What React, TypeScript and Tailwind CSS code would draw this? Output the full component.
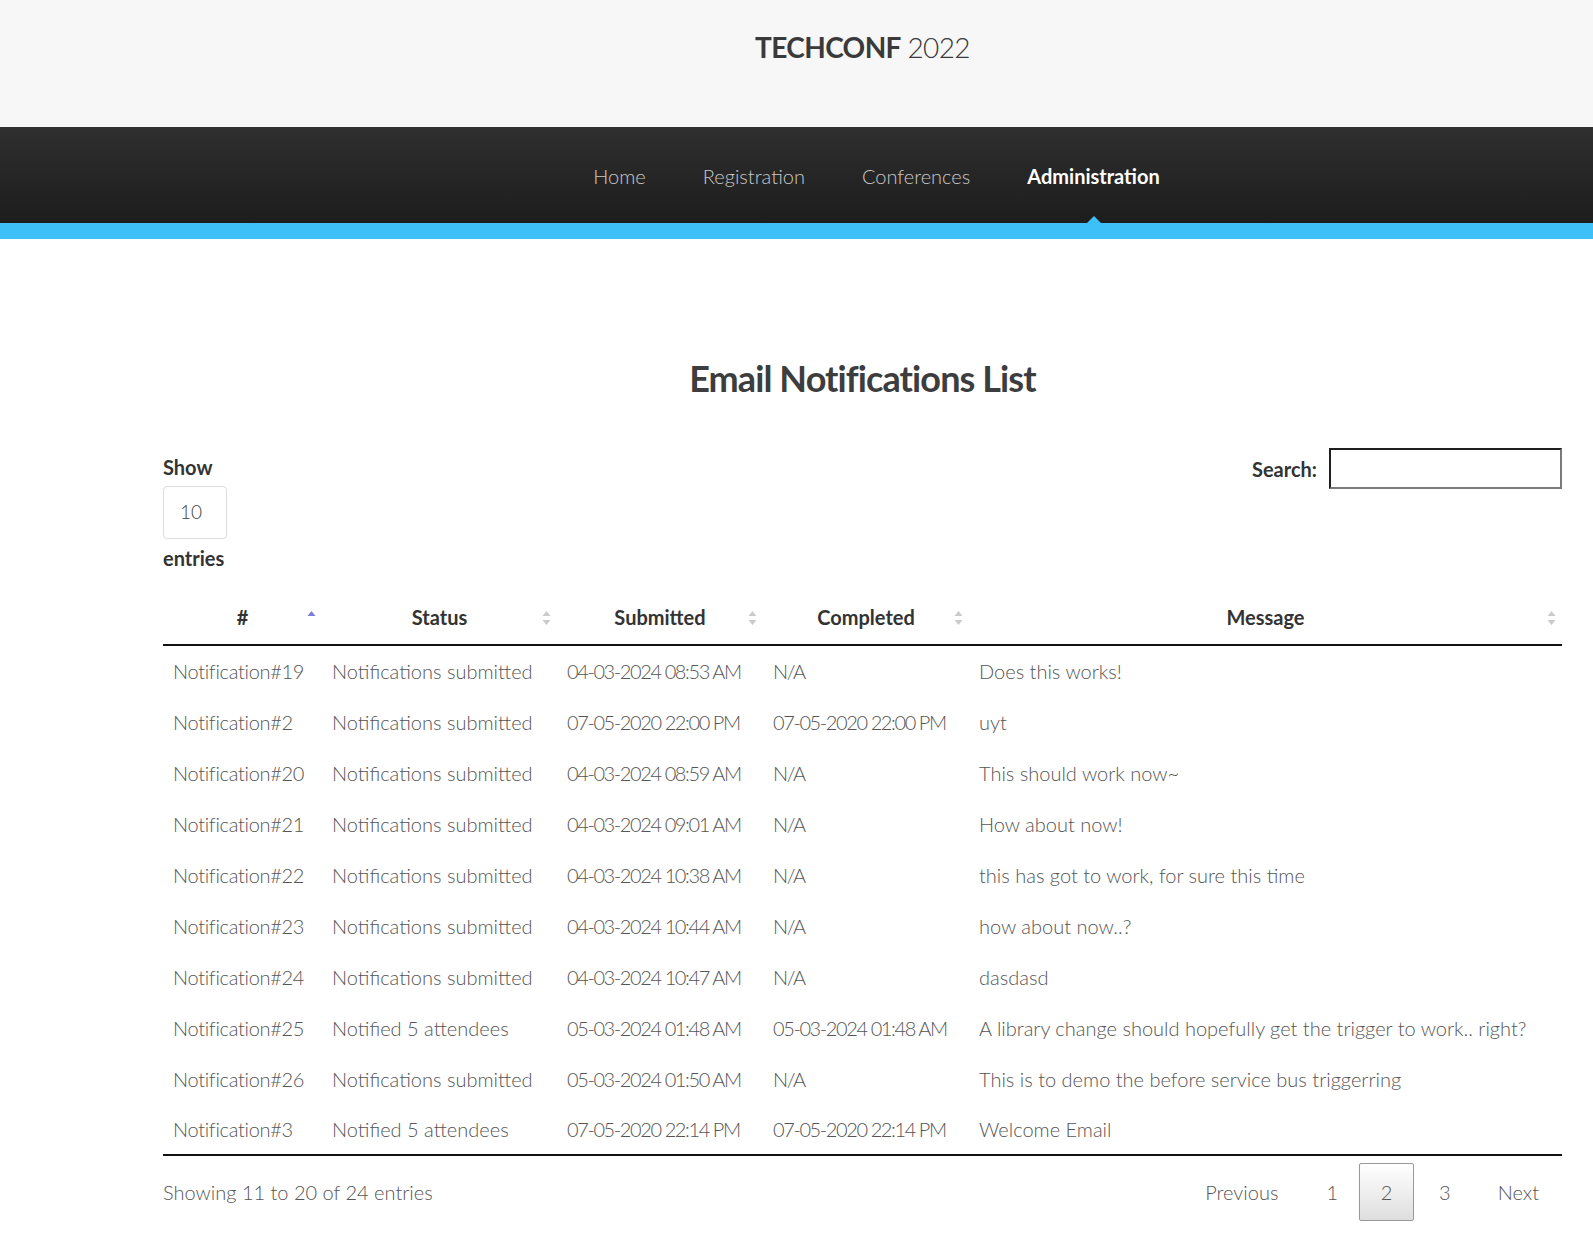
import React from 'react';

const rows = [
  ['Notification#19', 'Notifications submitted', '04-03-2024 08:53 AM', 'N/A', 'Does this works!'],
  ['Notification#2', 'Notifications submitted', '07-05-2020 22:00 PM', '07-05-2020 22:00 PM', 'uyt'],
  ['Notification#20', 'Notifications submitted', '04-03-2024 08:59 AM', 'N/A', 'This should work now~'],
  ['Notification#21', 'Notifications submitted', '04-03-2024 09:01 AM', 'N/A', 'How about now!'],
  ['Notification#22', 'Notifications submitted', '04-03-2024 10:38 AM', 'N/A', 'this has got to work, for sure this time'],
  ['Notification#23', 'Notifications submitted', '04-03-2024 10:44 AM', 'N/A', 'how about now..?'],
  ['Notification#24', 'Notifications submitted', '04-03-2024 10:47 AM', 'N/A', 'dasdasd'],
  ['Notification#25', 'Notified 5 attendees', '05-03-2024 01:48 AM', '05-03-2024 01:48 AM', 'A library change should hopefully get the trigger to work.. right?'],
  ['Notification#26', 'Notifications submitted', '05-03-2024 01:50 AM', 'N/A', 'This is to demo the before service bus triggerring'],
  ['Notification#3', 'Notified 5 attendees', '07-05-2020 22:14 PM', '07-05-2020 22:14 PM', 'Welcome Email'],
];

const columns = [
  { label: '#', width: 'w-[159px]', active: true },
  { label: 'Status', width: 'w-[235px]' },
  { label: 'Submitted', width: 'w-[206px]' },
  { label: 'Completed', width: 'w-[206px]' },
  { label: 'Message', width: 'w-[593px]' },
];

// per-column letter spacing, Lato digits run wider than the original font
const cellTracking = ['tracking-[-0.3px]', 'tracking-normal', 'tracking-[-1.4px]', 'tracking-[-1.4px]', 'tracking-normal'];

const SortIcon = ({ active }: { active?: boolean }) => (
  <svg width="9" height="16" viewBox="0 0 9 16" className="absolute right-[6px] top-[9px]">
    <path d="M4.5 1 L8.5 6 L0.5 6 Z" fill={active ? '#7c7fd6' : '#cbcbcb'} />
    {!active && <path d="M4.5 15 L8.5 10 L0.5 10 Z" fill="#cbcbcb" />}
  </svg>
);

export default function App() {
  return (
    <div className="min-h-[1258px] bg-white font-['Lato',_'Liberation_Sans',_sans-serif] text-[#333]">
      <header className="h-[127px] bg-[#f7f7f7] flex items-center justify-center pb-[34px]">
        <h1 className="text-[28px] text-[#3a3a3a] tracking-[-0.6px] ml-[132px]">
          <span className="font-bold">TECHCONF</span> <span className="font-light">2022</span>
        </h1>
      </header>

      <nav className="h-[96px] bg-gradient-to-b from-[#2f2f2f] to-[#1d1d1d] flex items-center justify-center">
        <ul className="flex gap-[57px] text-[20px] ml-[160px] pt-[2px]">
          <li className="text-[#c9c9c9] font-light">Home</li>
          <li className="text-[#c9c9c9] font-light">Registration</li>
          <li className="text-[#c9c9c9] font-light">Conferences</li>
          <li className="relative text-white font-bold">
            Administration
            <span className="absolute left-1/2 -translate-x-1/2 top-[55px] w-0 h-0 border-l-[8px] border-r-[8px] border-b-[8px] border-l-transparent border-r-transparent border-b-[#3cc0f7]" />
          </li>
        </ul>
      </nav>
      <div className="h-[16px] bg-[#3cc0f7]" />

      <main className="ml-[163px] w-[1399px]">
        <h2 className="text-center text-[36px] font-bold text-[#3d3d3d] mt-[112px] tracking-tight">Email Notifications List</h2>

        <div className="flex justify-between items-start mt-[47px]">
          <div className="flex flex-col text-[20px] font-bold text-[#333]">
            <span className="leading-[30px]">Show</span>
            <div className="mt-[4px] w-[64px] h-[53px] border border-[#dcdcdc] rounded-[4px] flex items-center pl-[16px] text-[19px] font-light text-[#444]">10</div>
            <span className="leading-[30px] mt-[4px]">entries</span>
          </div>
          <div className="flex items-center gap-[12px] mt-[-4px]">
            <span className="text-[20px] font-bold">Search:</span>
            <input className="w-[233px] h-[41px] border-2 border-t-[#1f1f1f] border-l-[#1f1f1f] border-r-[#7a7a7a] border-b-[#7a7a7a] outline-none" />
          </div>
        </div>

        <table className="mt-[28px] w-full table-fixed border-collapse">
          <thead>
            <tr className="h-[44px] border-b-2 border-[#111]">
              {columns.map((c) => (
                <th key={c.label} className={`${c.width} relative text-[20px] font-bold text-[#333] text-center align-middle pb-[12px]`}>
                  {c.label}
                  <SortIcon active={c.active} />
                </th>
              ))}
            </tr>
          </thead>
          <tbody className="border-b-2 border-[#111]">
            {rows.map((r) => (
              <tr key={r[0]} className="h-[51px]">
                {r.map((cell, i) => (
                  <td key={i} className={`px-[10px] text-[20px] font-light text-[#555] whitespace-nowrap ${cellTracking[i]}`}>{cell}</td>
                ))}
              </tr>
            ))}
          </tbody>
        </table>

        <div className="flex justify-between items-center mt-[7px]">
          <span className="text-[20px] font-light text-[#555]">Showing 11 to 20 of 24 entries</span>
          <div className="flex items-center text-[20px] font-light text-[#555] mr-[23px]">
            <span className="mr-[48px]">Previous</span>
            <span className="mr-[21px]">1</span>
            <span className="w-[55px] h-[58px] flex items-center justify-center border border-[#999] rounded-[2px] bg-gradient-to-b from-white to-[#dedede]">2</span>
            <span className="ml-[25px]">3</span>
            <span className="ml-[47px]">Next</span>
          </div>
        </div>
      </main>
    </div>
  );
}
